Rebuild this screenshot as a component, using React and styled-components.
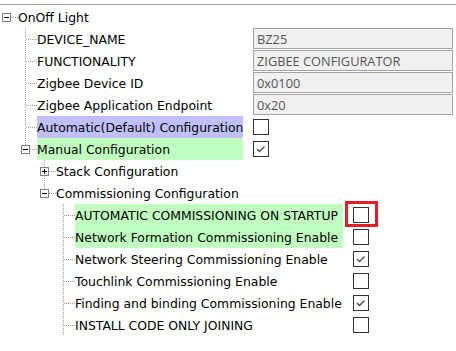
import styled, { createGlobalStyle } from "styled-components";

const GlobalStyle = createGlobalStyle`
    body {
        margin: 0;
        background: #ffffff;
        font-family: "DejaVu Sans", sans-serif;
    }
`;

const tree = {
    label: 'OnOff Light',
    open: true,
    groupWidth: 206,
    children: [
        { label: 'DEVICE_NAME', field: 'BZ25' },
        { label: 'FUNCTIONALITY', field: 'ZIGBEE CONFIGURATOR' },
        { label: 'Zigbee Device ID', field: '0x0100' },
        { label: 'Zigbee Application Endpoint', field: '0x20' },
        { label: 'Automatic(Default) Configuration', tone: 'blue', check: false },
        {
            label: 'Manual Configuration',
            tone: 'green',
            check: true,
            open: true,
            children: [
                { label: 'Stack Configuration', open: false, children: [] },
                {
                    label: 'Commissioning Configuration',
                    open: true,
                    keepLine: true,
                    groupWidth: 268,
                    children: [
                        { label: 'AUTOMATIC COMMISSIONING ON STARTUP', tone: 'green', check: false, flagged: true },
                        { label: 'Network Formation Commissioning Enable', tone: 'green', check: false },
                        { label: 'Network Steering Commissioning Enable', check: true },
                        { label: 'Touchlink Commissioning Enable', check: false },
                        { label: 'Finding and binding Commissioning Enable', check: true },
                        { label: 'INSTALL CODE ONLY JOINING', check: false },
                    ],
                },
            ],
        },
    ],
};

const LINE = '#a0a0a0';

const Guide = ({ on }) => (
    <GuideCell width="19" height="22" shapeRendering="crispEdges">
        {on && <line x1="6.5" y1="0" x2="6.5" y2="22" stroke={LINE} strokeDasharray="1 1" />}
    </GuideCell>
);

const Branch = ({ root, last, box, open }) => (
    <BranchCell width="18" height="22" shapeRendering="crispEdges">
        {!root && (
            <line x1="6.5" y1="0" x2="6.5" y2={last ? 11 : 22} stroke={LINE} strokeDasharray="1 1" />
        )}
        <line x1={box ? 11 : 7} y1="11.5" x2="18" y2="11.5" stroke={LINE} strokeDasharray="1 1" />
        {box && (
            <g>
                <rect x="2.5" y="7.5" width="8" height="8" fill="#ffffff" stroke="#808080" />
                <line x1="4" y1="11.5" x2="9" y2="11.5" stroke="#000000" />
                {!open && <line x1="6.5" y1="9" x2="6.5" y2="14" stroke="#000000" />}
            </g>
        )}
    </BranchCell>
);

const CheckBox = ({ checked, flagged }) => (
    <Check $flagged={flagged}>
        {checked && (
            <svg width="14" height="14" viewBox="0 0 14 14">
                <polyline points="3,7 5.5,9.5 10.5,4.5" fill="none" stroke="#4a4a4a" strokeWidth="1.4" />
            </svg>
        )}
    </Check>
);

const TreeRows = ({ node, level, guides, last, width }) => {
    const hasBox = !!node.children;
    const rows = [
        <Row key={node.label}>
            {guides.map((on, i) => <Guide key={i} on={on} />)}
            <Branch root={level === 0} last={last} box={hasBox} open={node.open} />
            <Label $tone={node.tone} $width={width}>{node.label}</Label>
            {node.field !== undefined && <Field>{node.field}</Field>}
            {node.check !== undefined && <CheckBox checked={node.check} flagged={node.flagged} />}
        </Row>,
    ];

    if (node.open && node.children) {
        const childGuides = level === 0 ? [] : [...guides, !last];
        const nextGuides = level === 0 ? [false] : childGuides;
        node.children.forEach((child, i) => {
            const isLast = i === node.children.length - 1 && !node.keepLine;
            rows.push(
                <TreeRows
                    key={child.label}
                    node={child}
                    level={level + 1}
                    guides={nextGuides}
                    last={isLast}
                    width={node.groupWidth}
                />
            );
        });
    }
    return rows;
};

const App = () => {
    return (
        <Page>
            <GlobalStyle />
            <Tree>
                <TreeRows node={tree} level={0} guides={[]} last />
            </Tree>
        </Page>
    );
};

const Page = styled.div`
    width: 456px;
    height: 351px;
    padding-top: 4px;
    box-sizing: border-box;
    overflow: hidden;
`;

const Tree = styled.div`
    display: flex;
    flex-direction: column;
    border-top: 1px solid #a0a0a0;
    padding-top: 1px;
`;

const Row = styled.div`
    display: flex;
    flex-direction: row;
    align-items: center;
    height: 22px;
`;

const GuideCell = styled.svg`
    flex-shrink: 0;
    display: block;
`;

const BranchCell = styled.svg`
    flex-shrink: 0;
    display: block;
`;

const Label = styled.div`
    display: flex;
    align-items: center;
    height: 22px;
    width: ${p => (p.$width ? `${p.$width}px` : 'auto')};
    flex-shrink: 0;
    margin-right: 10px;
    font-size: 12.4px;
    color: #000000;
    white-space: nowrap;
    background: ${p => (p.$tone === 'blue' ? '#c0c0ff' : p.$tone === 'green' ? '#c0ffc0' : 'transparent')};
`;

const Field = styled.div`
    align-self: flex-start;
    width: 200px;
    height: 21px;
    box-sizing: border-box;
    border: 1px solid #a4a4a4;
    background: #f0f0f0;
    padding-left: 3px;
    display: flex;
    align-items: center;
    font-family: "Open Sans", sans-serif;
    font-size: 12.8px;
    color: #555555;
`;

const Check = styled.div`
    position: relative;
    width: 16px;
    height: 16px;
    box-sizing: border-box;
    border: 1px solid #333333;
    background: #ffffff;
    display: flex;
    align-items: center;
    justify-content: center;

    &::after {
        content: '';
        display: ${p => (p.$flagged ? 'block' : 'none')};
        position: absolute;
        left: -9px;
        top: -7px;
        right: -10px;
        bottom: -5px;
        border: 3px solid #ed1c24;
    }
`;

export default App;
